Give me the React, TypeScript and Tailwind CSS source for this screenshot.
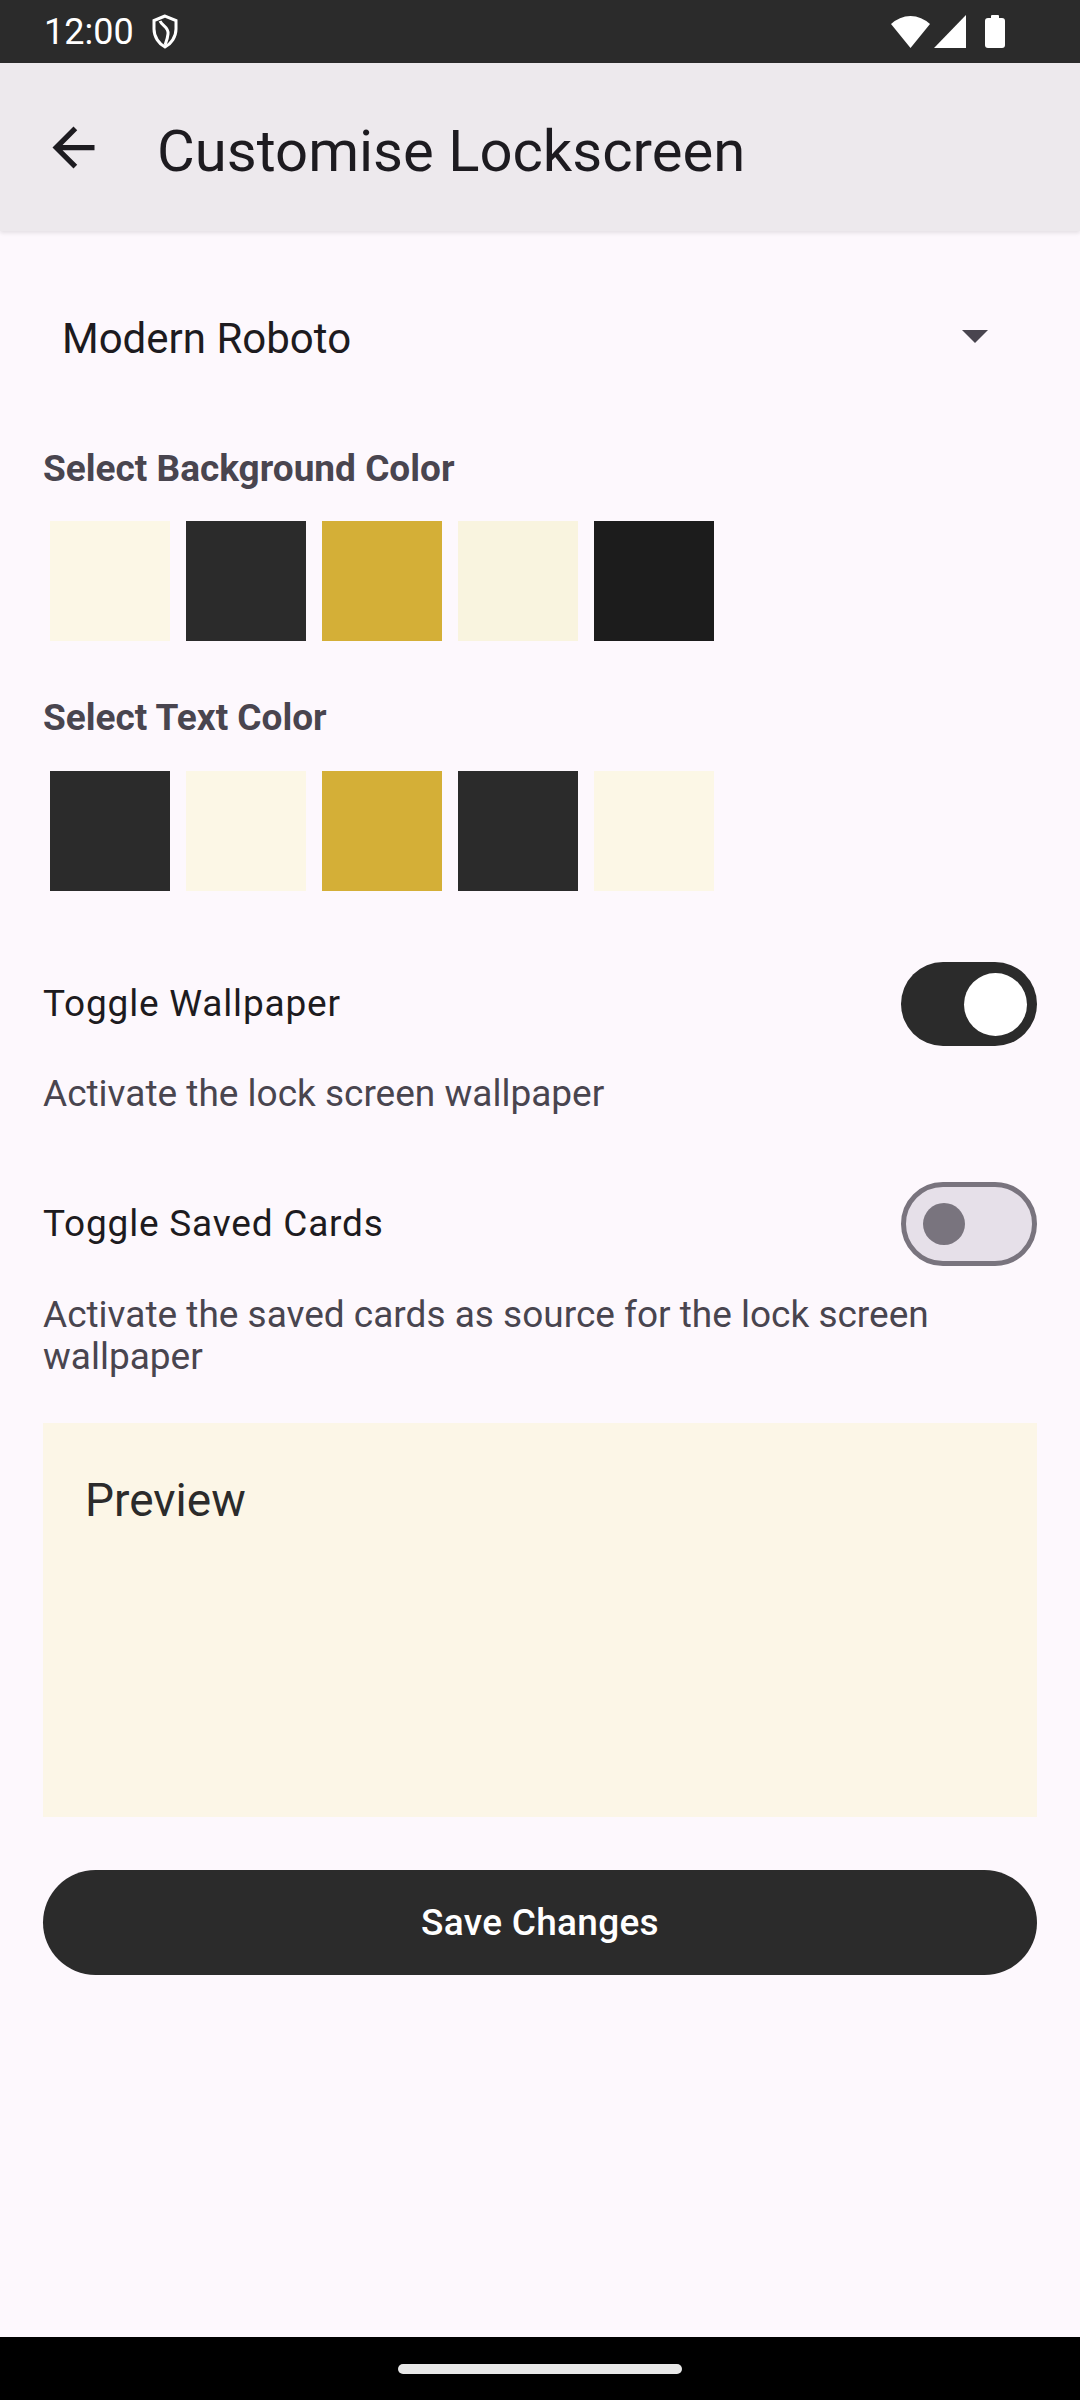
import { useState } from "react";

// swatch colours — class names written out so Tailwind picks them up
const BG_SWATCHES = [
  "bg-[#fcf7e6]",
  "bg-[#2b2b2b]",
  "bg-[#d4af37]",
  "bg-[#f9f4df]",
  "bg-[#1c1c1c]",
];
const TEXT_SWATCHES = [
  "bg-[#2b2b2b]",
  "bg-[#fcf7e6]",
  "bg-[#d4af37]",
  "bg-[#2b2b2b]",
  "bg-[#fcf7e6]",
];

export default function App() {
  const [wallpaper, setWallpaper] = useState(true);
  const [savedCards, setSavedCards] = useState(false);

  return (
    <div className="flex h-[2400px] w-[1080px] flex-col bg-[#fdf8fd] font-[Roboto,sans-serif]">
      <StatusBar />
      <AppBar title="Customise Lockscreen" />

      <main className="flex flex-1 flex-col px-[43px]">
        {/* font dropdown */}
        <div className="mt-[83px] flex h-[50px] justify-between pl-[19px] pr-[49px]">
          <span className="text-[42px] leading-[50px] text-[#1d1b20]">Modern Roboto</span>
          <svg width="26" height="13" viewBox="0 0 10 5" className="mt-[16px] self-start">
            <polygon points="0,0 10,0 5,5" fill="#49454f" />
          </svg>
        </div>

        <SectionLabel className="mt-[83px]">Select Background Color</SectionLabel>
        <SwatchRow swatches={BG_SWATCHES} className="mt-[30px]" />

        <SectionLabel className="mt-[55px]">Select Text Color</SectionLabel>
        <SwatchRow swatches={TEXT_SWATCHES} className="mt-[31px]" />

        <div className="mt-[71px] flex items-center justify-between">
          <span className="text-[37px] leading-[44px] tracking-[0.8px] text-[#1d1b20]">Toggle Wallpaper</span>
          <Switch checked={wallpaper} onChange={setWallpaper} />
        </div>
        <p className="mt-[27px] text-[37px] leading-[42px] text-[#49454f]">
          Activate the lock screen wallpaper
        </p>

        <div className="mt-[67px] flex items-center justify-between">
          <span className="text-[37px] leading-[44px] tracking-[0.8px] text-[#1d1b20]">Toggle Saved Cards</span>
          <Switch checked={savedCards} onChange={setSavedCards} />
        </div>
        <p className="mt-[28px] text-[37px] leading-[42px] text-[#49454f]">
          Activate the saved cards as source for the lock screen wallpaper
        </p>

        <div className="mt-[45px] h-[394px] bg-[#fcf6e7] pl-[42px] pt-[49px]">
          <span className="text-[46px] leading-[56px] text-[#2b2b2b]">Preview</span>
        </div>

        <button className="mt-[53px] flex h-[105px] items-center justify-center rounded-full bg-[#2b2b2b] text-[37px] font-medium tracking-[0.3px] text-white">
          Save Changes
        </button>
      </main>

      <NavBar />
    </div>
  );
}

// ─── pieces ────────────────────────────────────────────────────────────────

function StatusBar() {
  return (
    <div className="flex h-[63px] items-center bg-[#2b2b2b] pl-[44px] pr-[75px] text-white">
      <span className="text-[36px] leading-none">12:00</span>
      <svg width="28" height="35" viewBox="0 0 28 35" className="ml-[17px]" fill="none" stroke="white" strokeWidth="3">
        <path d="M14 2 L3 6.5 V15 C3 23 8 30 14 33 C20 30 25 23 25 15 V6.5 Z" />
        <path d="M9 7 C11 12 18 13 17 20 C16.5 25 15 28 14 31" />
      </svg>
      <div className="ml-auto flex items-center">
        <svg width="39" height="33" viewBox="0 0 39 33">
          <path d="M0 9 A28 28 0 0 1 39 9 L19.5 33 Z" fill="white" />
        </svg>
        <svg width="32" height="33" viewBox="0 0 32 33" className="ml-[4px]">
          <polygon points="32,0 32,33 0,33" fill="white" />
        </svg>
        <svg width="20" height="33" viewBox="0 0 20 33" className="ml-[19px]">
          <rect x="6" y="0" width="8" height="4" rx="1" fill="white" />
          <rect x="0" y="3" width="20" height="30" rx="3" fill="white" />
        </svg>
      </div>
    </div>
  );
}

function AppBar({ title }: { title: string }) {
  return (
    <header className="relative z-10 flex h-[168px] items-center bg-[#ede9ed] shadow-[0_2px_4px_rgba(0,0,0,0.10)]">
      <svg width="63" height="63" viewBox="0 0 24 24" className="ml-[42px]">
        <path d="M20 11H7.83l5.59-5.59L12 4l-8 8 8 8 1.41-1.41L7.83 13H20v-2z" fill="#1d1b20" />
      </svg>
      <h1 className="ml-[52px] mt-[8px] text-[58px] leading-none text-[#1d1b20]">{title}</h1>
    </header>
  );
}

function SectionLabel({ children, className = "" }: { children: React.ReactNode; className?: string }) {
  return (
    <h2 className={`${className} text-[37px] font-bold leading-[44px] text-[#49454f]`}>{children}</h2>
  );
}

function SwatchRow({ swatches, className = "" }: { swatches: string[]; className?: string }) {
  return (
    <div className={`${className} flex gap-[16px] pl-[7px]`}>
      {swatches.map((bg, i) => (
        <button key={i} className={`h-[120px] w-[120px] ${bg}`} />
      ))}
    </div>
  );
}

function Switch({ checked, onChange }: { checked: boolean; onChange: (v: boolean) => void }) {
  if (checked) {
    return (
      <button
        onClick={() => onChange(false)}
        className="flex h-[84px] w-[136px] items-center justify-end rounded-full bg-[#2b2b2b] pr-[10px]"
      >
        <span className="h-[63px] w-[63px] rounded-full bg-white" />
      </button>
    );
  }
  return (
    <button
      onClick={() => onChange(true)}
      className="flex h-[84px] w-[136px] items-center rounded-full border-[5px] border-[#79747e] bg-[#e6e0e9] pl-[17px]"
    >
      <span className="h-[42px] w-[42px] rounded-full bg-[#79747e]" />
    </button>
  );
}

function NavBar() {
  return (
    <div className="flex h-[63px] justify-center bg-black pt-[27px]">
      <div className="h-[10px] w-[284px] rounded-full bg-[#e8e8e8]" />
    </div>
  );
}
